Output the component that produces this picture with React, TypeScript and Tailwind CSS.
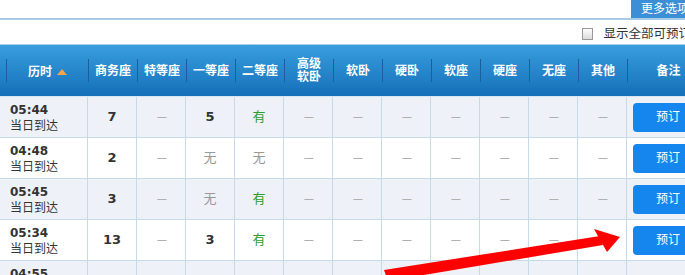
const font = { fontFamily: '"DejaVu Sans", "Noto Sans CJK SC", sans-serif' }

type Row = { time: string; cells: string[] }

const rows: Row[] = [
  { time: '05:44', cells: ['7', '--', '5', '有', '--', '--', '--', '--', '--', '--', '--'] },
  { time: '04:48', cells: ['2', '--', '无', '无', '--', '--', '--', '--', '--', '--', '--'] },
  { time: '05:45', cells: ['3', '--', '无', '有', '--', '--', '--', '--', '--', '--', '--'] },
  { time: '05:34', cells: ['13', '--', '3', '有', '--', '--', '--', '--', '--', '--', '--'] },
  { time: '04:55', cells: ['--', '--', '--', '--', '--', '--', '--', '--', '--', '--', '--'] },
]

const headers = ['商务座', '特等座', '一等座', '二等座', '高级软卧', '软卧', '硬卧', '软座', '硬座', '无座', '其他']

const Cell = ({ value }: { value: string }) => {
  if (value === '有') return <span className="text-[13px] text-[#2c9e2c]">有</span>
  if (value === '无') return <span className="text-[13px] text-[#999]">无</span>
  if (value === '--')
    return <span className="inline-block text-[12px] text-[#b0b0b0] tracking-[-1.5px] scale-x-[1.5]">--</span>
  return <span className="text-[13px] font-bold text-[#333]">{value}</span>
}

const HeadCell = ({ children }: { children: React.ReactNode }) => (
  <div className="flex items-center h-full">
    <div className="w-px h-[23px] bg-[#1d5e9e]" />
    <div className="flex-1 flex items-center justify-center text-center text-white font-bold text-[12px] leading-[13px]">
      {children}
    </div>
  </div>
)

export default function App() {
  return (
    <div className="relative w-[685px] h-[275px] overflow-hidden bg-white" style={font}>
      <div className="w-[709px]">
        {/* top bar */}
        <div className="flex justify-end h-[18px]">
          <div className="w-[78px] h-[18px] bg-[#3b8fd6] text-white text-[12px] leading-[18px] pl-[10px] whitespace-nowrap">
            更多选项
          </div>
        </div>
        <div className="h-[2px] bg-[#a9cbe8]" />
        <div className="flex justify-end items-center h-[25px] pt-[4px] pr-[18px] border-b border-[#a9cde9]">
          <div className="w-[11px] h-[12px] border border-[#999] bg-gradient-to-b from-[#fdfdfd] to-[#dcdcdc]" />
          <span className="ml-[10px] text-[12.5px] text-[#333] whitespace-nowrap">显示全部可预订</span>
        </div>

        {/* header */}
        <div className="grid grid-cols-[88px_repeat(11,49px)_82px] h-[52px] bg-gradient-to-b from-[#389ede] to-[#1470b9] border-b border-[#d6e6f2]">
          <div className="flex items-center h-full pl-[6px]">
            <div className="w-px h-[23px] bg-[#1d5e9e]" />
            <div className="flex-1 flex items-center justify-center text-white font-bold text-[12px] pt-[2px]">
              历时
              <span className="ml-[5px] w-0 h-0 border-l-[5px] border-r-[5px] border-b-[6px] border-l-transparent border-r-transparent border-b-[#f7a14a]" />
            </div>
          </div>
          {headers.map((h) => (
            <HeadCell key={h}>
              {h === '高级软卧' ? (
                <span>
                  高级
                  <br />
                  软卧
                </span>
              ) : (
                <span className="pt-[2px]">{h}</span>
              )}
            </HeadCell>
          ))}
          <HeadCell>
            <span className="pt-[2px]">备注</span>
          </HeadCell>
        </div>

        {/* body */}
        {rows.map((r, i) => (
          <div
            key={i}
            className={`grid grid-cols-[88px_repeat(11,49px)_82px] h-[41px] border-b border-[#c6dbe8] ${
              i % 2 === 0 ? 'bg-[#eef1f8]' : 'bg-white'
            }`}
          >
            <div className="border-r border-[#c6dbe8] pl-[10px] pt-[5px] text-[#333]">
              <div className="text-[12px] font-bold leading-[16px]">{r.time}</div>
              <div className="text-[12px] leading-[16px]">当日到达</div>
            </div>
            {r.cells.map((c, j) => (
              <div key={j} className="flex items-center justify-center border-r border-[#c6dbe8]">
                <Cell value={c} />
              </div>
            ))}
            <div className="flex items-center pl-[6px]">
              {i < 4 && (
                <div className="w-[70px] h-[29px] rounded-[4px] bg-[#1686ef] text-white text-[12px] flex items-center justify-center">
                  预订
                </div>
              )}
            </div>
          </div>
        ))}
      </div>

      {/* red annotation arrow */}
      <svg className="absolute left-0 top-0 pointer-events-none" width="685" height="275">
        <polygon points="384,270 600,236 603,245 388,281" fill="#ff0000" />
        <polygon points="594,229 620,237 607,252" fill="#ff0000" />
      </svg>
    </div>
  )
}
